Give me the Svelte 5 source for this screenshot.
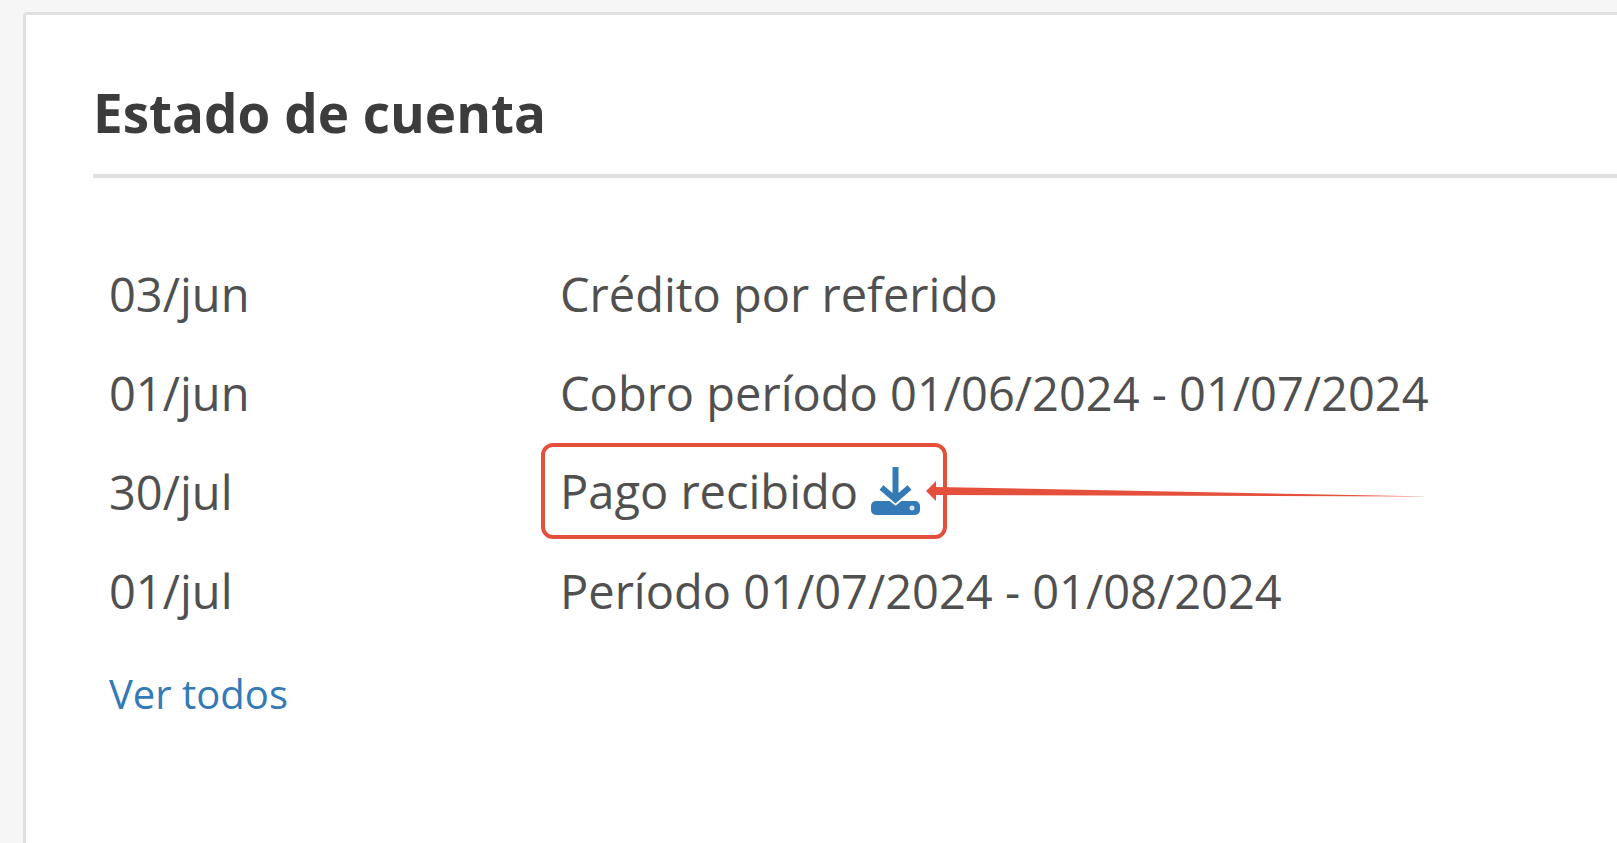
<script lang="ts">
	type Movement = { date: string; text: string; receipt?: boolean };

	const movements: Movement[] = [
		{ date: '03/jun', text: 'Crédito por referido' },
		{ date: '01/jun', text: 'Cobro período 01/06/2024 - 01/07/2024' },
		{ date: '30/jul', text: 'Pago recibido', receipt: true },
		{ date: '01/jul', text: 'Período 01/07/2024 - 01/08/2024' }
	];
</script>

<main>
	<section class="card">
		<h2>Estado de cuenta</h2>

		<table>
			<tbody>
				{#each movements as { date, text, receipt }}
					<tr>
						<td class="date">{date}</td>
						<td>
							{#if receipt}
								<div class="payment">
									{text}
									<a class="download" href="#recibo" aria-label="Descargar recibo">
										<svg viewBox="0 0 50 50" width="50" height="50">
											<rect x="1" y="35" width="49" height="14" rx="5" fill="currentColor" />
											<path d="M25.500 20V35M10 21.500L25.500 34L41 21.500" fill="none" stroke="#fff" stroke-width="9" />
											<path d="M25.500 1V32M11.500 21.500L25.500 33.500L39.500 21.500" fill="none" stroke="currentColor" stroke-width="6" />
											<circle cx="42" cy="42" r="2.500" fill="#d5e6f5" />
										</svg>
									</a>
									<span class="frame"></span>
									<svg class="arrow" viewBox="0 0 506 22" width="506" height="22">
										<path d="M0 11L10 1V7L505 16.500L10 15V21Z" fill="#e5503c" />
									</svg>
								</div>
							{:else}
								{text}
							{/if}
						</td>
					</tr>
				{/each}
			</tbody>
		</table>

		<a class="all" href="#movimientos">Ver todos</a>
	</section>
</main>

<style>
	:global(body) {
		background-color: #f6f6f6;
		overflow: hidden;
	}
	main {
		box-sizing: border-box;
		display: flex;
		min-height: 100vh;
		padding: 12px 0 0 23px;
		font-family: 'Open Sans', sans-serif;
		color: #505050;
	}
	.card {
		flex: 1;
		padding: 63px 0 32px 67px;
		background-color: white;
		border: 3px solid #e0e0e0;
		border-width: 3px 0 0 3px;
		border-top-left-radius: 4px;
	}
	h2 {
		margin: 0 0 67px;
		padding-bottom: 26px;
		border-bottom: 4px solid #e0e0e0;
		font-size: 53px;
		font-weight: 700;
		line-height: 70px;
		color: #3c3c3c;
	}
	table {
		width: 100%;
		border-collapse: collapse;
		font-size: 47px;
		line-height: 99px;
	}
	td {
		padding: 0;
		white-space: nowrap;
	}
	.date {
		width: 451px;
		padding-left: 16px;
	}
	.payment {
		position: relative;
		display: inline-flex;
		align-items: center;
		gap: 12px;
		line-height: 96px;
		vertical-align: top;
	}
	.download {
		display: flex;
		color: #337ab7;
	}
	.frame {
		position: absolute;
		top: 0;
		left: -19px;
		right: -27px;
		height: 88px;
		border: 4px solid #e5503c;
		border-radius: 12px;
	}
	.arrow {
		position: absolute;
		top: 37px;
		left: calc(100% + 6px);
	}
	.all {
		display: block;
		width: max-content;
		margin-left: 16px;
		font-size: 40px;
		line-height: 105px;
		color: #337ab7;
		text-decoration: none;
	}
</style>
